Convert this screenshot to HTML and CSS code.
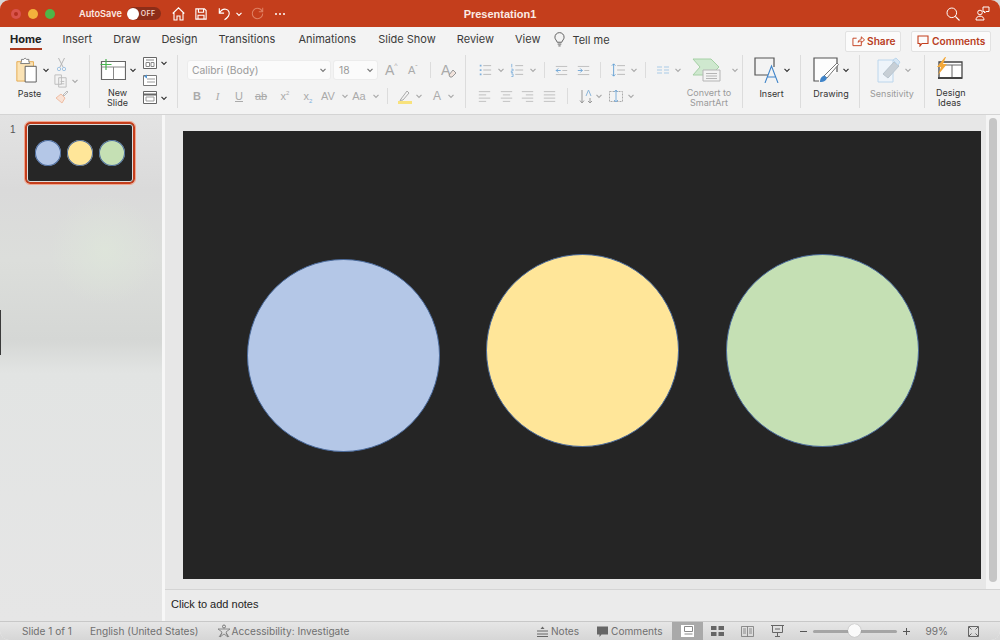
FILE: index.html
```html
<!DOCTYPE html>
<html lang="en">
<head>
<meta charset="utf-8">
<title>Presentation1</title>
<link rel="stylesheet" href="styles.css">
</head>
<body>
<svg class="defs" width="0" height="0" aria-hidden="true">
  <defs>
    <symbol id="chev" viewBox="0 0 8 8"><path d="M1.500 2.800 4 5.300l2.500-2.500" fill="none" stroke="currentColor" stroke-width="1.200"/></symbol>
    <symbol id="list" viewBox="0 0 16 16"><path d="M2 3h2M2 8h2M2 13h2" stroke="#7fb0dc" stroke-width="2" fill="none"/><path d="M6 3h9M6 8h9M6 13h9" stroke="currentColor" fill="none"/></symbol>
    <symbol id="numlist" viewBox="0 0 16 16"><path d="M2 1v4M1.500 7h2v2h-2v2h2M1.500 12.500h2v3h-2" stroke="#7fb0dc" fill="none"/><path d="M6 3h9M6 8h9M6 13h9" stroke="currentColor" fill="none"/></symbol>
    <symbol id="indl" viewBox="0 0 16 16"><path d="M1 3h14M9 8h6M1 13h14" stroke="currentColor" fill="none"/><path d="M7 8H1.500M4 5.500 1.500 8 4 10.500" stroke="#5c9bd3" fill="none"/></symbol>
    <symbol id="indr" viewBox="0 0 16 16"><path d="M1 3h14M9 8h6M1 13h14" stroke="currentColor" fill="none"/><path d="M1 8h5.500M4 5.500 6.500 8 4 10.500" stroke="#5c9bd3" fill="none"/></symbol>
    <symbol id="spacing" viewBox="0 0 16 16"><path d="M7 3h9M7 8h9M7 13h9" stroke="currentColor" fill="none"/><path d="M3 1v14M1 3l2-2 2 2M1 13l2 2 2-2" stroke="#5c9bd3" fill="none"/></symbol>
    <symbol id="al" viewBox="0 0 16 16"><path d="M1 2h14M1 6h9M1 10h14M1 14h9" stroke="currentColor" fill="none"/></symbol>
    <symbol id="ac" viewBox="0 0 16 16"><path d="M1 2h14M3.500 6h9M1 10h14M3.500 14h9" stroke="currentColor" fill="none"/></symbol>
    <symbol id="ar" viewBox="0 0 16 16"><path d="M1 2h14M6 6h9M1 10h14M6 14h9" stroke="currentColor" fill="none"/></symbol>
    <symbol id="aj" viewBox="0 0 16 16"><path d="M1 2h14M1 6h14M1 10h14M1 14h14" stroke="currentColor" fill="none"/></symbol>
  </defs>
</svg>
<div class="window">
  <header class="titlebar">
    <div class="tb-left">
      <span class="light light-r"></span><span class="light light-y"></span><span class="light light-g"></span>
      <span class="autosave">AutoSave</span>
      <span class="toggle"><span class="knob"></span><span class="off">OFF</span></span>
      <svg class="tb-home" width="13" height="14" viewBox="0 0 13 14"><path d="M.7 6.500 6.500.8l5.800 5.700M2 5.500V13h3V9h3v4h3V5.500" fill="none" stroke="#fff" stroke-width="1.100"/></svg>
      <svg class="tb-save" width="12" height="12" viewBox="0 0 14 14"><path d="M1 1h10l2 2v10H1zM4 1v4h6V1M3.500 13V8.500h7V13" fill="none" stroke="#fff" stroke-width="1.300"/></svg>
      <svg class="tb-undo" width="13" height="14" viewBox="0 0 15 15"><path d="M1.500 1v5.500H7M1.500 6.500C3.500 3 6 1.500 9 2c4 .8 5 5 3 8-1 1.600-2.500 3-4.500 4" fill="none" stroke="#fff" stroke-width="1.300"/></svg>
      <svg class="tb-chev" width="8" height="8"><use href="#chev"/></svg>
      <svg class="tb-redo" width="13" height="13" viewBox="0 0 15 15"><path d="M13.500 1v4.500H9M13 5C11.500 2.500 9.500 1.500 7.500 1.500a6 6 0 1 0 6 6" fill="none" stroke="#de7f62" stroke-width="1.200"/></svg>
      <span class="more"><i></i><i></i><i></i></span>
    </div>
    <div class="doc-title">Presentation1</div>
    <div class="tb-right">
      <svg width="14" height="14" viewBox="0 0 14 14"><circle cx="5.800" cy="5.800" r="4.800" fill="none" stroke="#fff"/><path d="M9.300 9.300 13.500 13.500" stroke="#fff" stroke-width="1.100"/></svg>
      <svg width="15" height="15" viewBox="0 0 15 15"><circle cx="5" cy="6.500" r="2.300" fill="none" stroke="#fff"/><path d="M1 14c0-2.500 1.500-3.800 4-3.800S9 11.500 9 14zM8 1h6v4.500h-3L9.500 7V5.500H8z" fill="none" stroke="#fff"/></svg>
    </div>
  </header>

  <nav class="tabs">
    <a class="tab tab-active">Home</a>
    <a class="tab">Insert</a>
    <a class="tab">Draw</a>
    <a class="tab">Design</a>
    <a class="tab tab-wide">Transitions</a>
    <a class="tab tab-mid">Animations</a>
    <a class="tab">Slide Show</a>
    <a class="tab">Review</a>
    <a class="tab">View</a>
    <span class="tell">
      <svg width="11" height="15" viewBox="0 0 12 16"><path d="M3.500 11C3 9 1 8 1 5.500a5 5 0 0 1 10 0C11 8 9 9 8.500 11zM4 13h4M4.800 15h2.400" fill="none" stroke="#555"/></svg>
      Tell me
    </span>
    <span class="tab-actions">
      <button class="act act-share"><svg width="13" height="12" viewBox="0 0 14 12"><path d="M5 3H1v8h9V8M6.500 7.500C7 5 9 4 10 4V1.500l3.500 3.300L10 8V6c-1.500 0-2.500.4-3.500 1.500z" fill="none" stroke="#c43e1c"/></svg>Share</button>
      <button class="act act-comments"><svg width="12" height="12" viewBox="0 0 12 12"><path d="M1 1h10v7.500H5L3 11V8.500H1z" fill="none" stroke="#c43e1c" stroke-width="1.100"/></svg>Comments</button>
    </span>
  </nav>

  <section class="ribbon">
    <div class="group g-clip">
      <div class="big paste">
        <div class="big-icon">
          <svg width="24" height="26" viewBox="0 0 26 28"><path d="M2 5h18v21H2z" fill="#fbe3b5" stroke="#e5a84a"/><path d="M7 5V2.500h2.500L11 1l1.500 1.500H15V5l1 2H6z" fill="#fff" stroke="#777"/><path d="M11 10h12v17H11z" fill="#fff" stroke="#555"/></svg>
          <svg class="chev-dark" width="8" height="8"><use href="#chev"/></svg>
        </div>
        <span class="big-label">Paste</span>
      </div>
      <div class="mini-col mini-clip">
        <svg width="9" height="15" viewBox="0 0 9 15"><path d="M1.500 1 6 10M7.500 1 3 10" stroke="#b5b5b5" fill="none"/><circle cx="2" cy="12" r="1.700" fill="none" stroke="#a3c4e2"/><circle cx="7" cy="12" r="1.700" fill="none" stroke="#a3c4e2"/></svg>
        <span class="mini"><svg width="14" height="14" viewBox="0 0 15 15"><path d="M1 1h7v10H1zM5 4h8v10H5z" fill="#f3f3f3" stroke="#bbb"/><path d="M7 8h4M7 10.500h4" stroke="#bbb"/></svg><svg class="chev" width="8" height="8"><use href="#chev"/></svg></span>
        <svg width="14" height="14" viewBox="0 0 14 14"><path d="M8 5l4-4 1 1-4 4z" fill="none" stroke="#bbb"/><path d="M6 4l4 4-3 5-6-5z" fill="#f9e2d5" stroke="#eebda4"/></svg>
      </div>
    </div>

    <div class="group g-slides">
      <div class="big newslide">
        <div class="big-icon">
          <svg width="26" height="21" viewBox="0 0 26 21"><path d="M1.500 2.500h24v18h-24z" fill="#fff" stroke="#666" stroke-width="1.200"/><path d="M1.500 8h24M13.500 8v12.500" stroke="#888"/><path d="M6 0v11M.5 5.500h11" stroke="#47b54f" stroke-width="1.200"/></svg>
          <svg class="chev-dark" width="8" height="8"><use href="#chev"/></svg>
        </div>
        <span class="big-label">New<br>Slide</span>
      </div>
      <div class="mini-col mini-slide">
        <span class="mini"><svg width="14" height="12" viewBox="0 0 14 12"><path d="M.5.500h13v11H.5z" fill="#fff" stroke="#666"/><path d="M3 3h8M3 5.500v4h3.500v-4zM8 5.500h3v4H8z" fill="none" stroke="#888"/></svg><svg class="chev-dark" width="8" height="8"><use href="#chev"/></svg></span>
        <span class="mini"><svg width="14" height="12" viewBox="0 0 14 12"><path d="M.5 1.500h13v10H.5z" fill="#fff" stroke="#777"/><path d="M4 5h8M4 8h8" stroke="#999"/><path d="M1 2.500 4 .5v4z" fill="#4f93d1"/></svg></span>
        <span class="mini"><svg width="14" height="13" viewBox="0 0 14 13"><path d="M.5.500h13v12H.5z" fill="#fff" stroke="#666"/><path d="M.5 3.500h13" stroke="#666" stroke-width="2"/><path d="M3 6h8v4H3z" fill="none" stroke="#999"/></svg><svg class="chev-dark" width="8" height="8"><use href="#chev"/></svg></span>
      </div>
    </div>

    <div class="group g-font">
      <div class="row r-font1">
        <span class="select sel-font">Calibri (Body)<svg width="8" height="8"><use href="#chev"/></svg></span>
        <span class="select sel-size">18<svg width="8" height="8"><use href="#chev"/></svg></span>
        <span class="gl gl-big">A<sup>^</sup></span>
        <span class="gl gl-small">A<sup>ˇ</sup></span>
        <span class="vsep vs-a"></span>
        <span class="gl gl-clear">A<svg width="9" height="9" viewBox="0 0 9 9"><path d="M1 6 5 1l3 3-4 4H2z" fill="#f1e3dc" stroke="#999"/></svg></span>
      </div>
      <div class="row r-font2">
        <span class="fmt f-b">B</span>
        <span class="fmt f-i">I</span>
        <span class="fmt f-u">U</span>
        <span class="fmt f-s">ab</span>
        <span class="fmt f-sup">x<sup>2</sup></span>
        <span class="fmt f-sub">x<sub>2</sub></span>
        <span class="fmt f-av">AV</span><svg class="chev" width="8" height="8"><use href="#chev"/></svg>
        <span class="fmt f-aa">Aa</span><svg class="chev" width="8" height="8"><use href="#chev"/></svg>
        <span class="vsep vs-b"></span>
        <svg class="f-hl" width="14" height="15" viewBox="0 0 14 15"><path d="M3 10 9 2l2 2-6 7-3 .5z" fill="none" stroke="#aaa"/><path d="M0 13.500h14" stroke="#f8e27c" stroke-width="3"/></svg><svg class="chev" width="8" height="8"><use href="#chev"/></svg>
        <span class="fmt f-col">A</span><svg class="chev" width="8" height="8"><use href="#chev"/></svg>
      </div>
    </div>

    <div class="group g-para">
      <div class="row r-para1">
        <svg class="p p1" width="14" height="14"><use href="#list"/></svg><svg class="chev" width="8" height="8"><use href="#chev"/></svg>
        <svg class="p p2" width="14" height="14"><use href="#numlist"/></svg><svg class="chev" width="8" height="8"><use href="#chev"/></svg>
        <span class="vsep vs-c"></span>
        <svg class="p p3" width="13" height="13"><use href="#indl"/></svg>
        <svg class="p p4" width="13" height="13"><use href="#indr"/></svg>
        <span class="vsep vs-d"></span>
        <svg class="p p5" width="14" height="14"><use href="#spacing"/></svg><svg class="chev" width="8" height="8"><use href="#chev"/></svg>
        <span class="vsep vs-e"></span>
        <svg class="p p6" width="12" height="8" viewBox="0 0 12 8"><path d="M0 1h5M7 1h5M0 4h5M7 4h5M0 7h5M7 7h5" stroke="#a9cbe7"/></svg><svg class="chev" width="8" height="8"><use href="#chev"/></svg>
      </div>
      <div class="row r-para2">
        <svg class="p a1" width="13" height="13"><use href="#al"/></svg>
        <svg class="p a2" width="13" height="13"><use href="#ac"/></svg>
        <svg class="p a3" width="13" height="13"><use href="#ar"/></svg>
        <svg class="p a4" width="13" height="13"><use href="#aj"/></svg>
        <span class="vsep vs-f"></span>
        <svg class="p a5" width="14" height="15" viewBox="0 0 14 15"><path d="M3 1v13M1 11.500 3 14l2-2.500" stroke="#999" fill="none"/><path d="M7 7l2.500-6L12 7" stroke="#8cb6da" fill="none"/><path d="M11 9v5M9 12l2 2 2-2" stroke="#999" fill="none"/></svg><svg class="chev" width="8" height="8"><use href="#chev"/></svg>
        <svg class="p a6" width="14" height="14" viewBox="0 0 14 14"><path d="M.5 2.500h13v10H.5z" fill="none" stroke="#aaa" stroke-dasharray="2 1"/><path d="M7 1v12M5 3l2-2 2 2M5 11l2 2 2-2" fill="none" stroke="#7fb0dc"/></svg><svg class="chev" width="8" height="8"><use href="#chev"/></svg>
      </div>
    </div>

    <div class="group g-art">
      <div class="big-icon">
        <svg width="36" height="24" viewBox="0 0 36 24"><path d="M1 1h18l8 8-8 8H1l7-8z" fill="#cfe8cf" stroke="#a5d0a5"/><path d="M11 12h17v11H11z" fill="#f3f3f3" stroke="#b5b5b5"/><path d="M14 15.500h11M14 18h11M14 20.500h11" stroke="#b5b5b5"/></svg>
        <svg class="chev" width="8" height="8"><use href="#chev"/></svg>
      </div>
      <span class="big-label dim-text">Convert to<br>SmartArt</span>
    </div>

    <div class="group g-insert">
      <div class="big-icon">
        <svg width="26" height="26" viewBox="0 0 26 26"><path d="M14 18H1V1h19v9" fill="none" stroke="#555" stroke-width="1.200"/><path d="M11 26 17.500 9 24 26M13.500 20h8" fill="none" stroke="#3f84c9" stroke-width="1.100"/></svg>
        <svg class="chev-dark" width="8" height="8"><use href="#chev"/></svg>
      </div>
      <span class="big-label">Insert</span>
    </div>

    <div class="group g-draw">
      <div class="big-icon">
        <svg width="26" height="26" viewBox="0 0 26 26"><path d="M6 24H1V1h23v14" fill="#fdfdfd" stroke="#555" stroke-width="1.200"/><path d="M11 19 24 6l1.500 1.500L14 21z" fill="#fff" stroke="#777"/><path d="M7 25c0-4 2-6 4.500-6.500L14 21c-1 3-4 4.500-7 4z" fill="#3f84c9"/></svg>
        <svg class="chev-dark" width="8" height="8"><use href="#chev"/></svg>
      </div>
      <span class="big-label">Drawing</span>
    </div>

    <div class="group g-sens">
      <div class="big-icon">
        <svg width="24" height="26" viewBox="0 0 24 26"><path d="M1 3h15v22H1z" fill="#eef4fa" stroke="#bcd6ec"/><path d="M6 17 17 5l5 4-11 12z" fill="#c7cfd6" stroke="#b8c4ce"/><path d="M16 3l3-2 4 4-2 3z" fill="#d7e6f3" stroke="#bcd6ec"/></svg>
        <svg class="chev" width="8" height="8"><use href="#chev"/></svg>
      </div>
      <span class="big-label dim-text">Sensitivity</span>
    </div>

    <div class="group g-ideas">
      <div class="big-icon">
        <svg width="27" height="25" viewBox="0 0 27 25"><path d="M3 5h23v16H3z" fill="#fff" stroke="#444" stroke-width="1.300"/><path d="M3 8h23M16 8v13" stroke="#666"/><path d="M2 21h24" stroke="#444" stroke-width="2"/><path d="M9 0 1 10h4L2 18l9-11H7l3-7z" fill="#f4a93a"/></svg>
      </div>
      <span class="big-label">Design<br>Ideas</span>
    </div>
  </section>

  <main class="workspace">
    <aside class="thumbs">
      <span class="thumb-num">1</span>
      <div class="thumb">
        <span class="t-dot t-blue"></span><span class="t-dot t-yellow"></span><span class="t-dot t-green"></span>
      </div>
    </aside>
    <div class="editor">
      <div class="stage">
        <div class="slide">
          <span class="circle c-blue"></span>
          <span class="circle c-yellow"></span>
          <span class="circle c-green"></span>
        </div>
        <div class="scrollbar"><span class="thumb-bar"></span></div>
      </div>
      <div class="notes">Click to add notes</div>
    </div>
  </main>

  <footer class="status">
    <span class="st st-slide">Slide 1 of 1</span>
    <span class="st st-lang">English (United States)</span>
    <span class="st st-acc"><svg width="14" height="14" viewBox="0 0 14 14"><circle cx="7" cy="2.500" r="1.500" fill="none" stroke="#777"/><path d="M1 5h12L9 8l2 5-4-3-4 3 2-5zM9 9l3 4M5 9l-3 4" fill="none" stroke="#777" stroke-width=".8"/></svg>Accessibility: Investigate</span>
    <span class="st st-notes"><svg width="11" height="11" viewBox="0 0 11 11"><path d="M0 5h11M0 8h11M0 10.500h11" stroke="#666"/><path d="M3.500 3 5.500.5 7.500 3z" fill="#666"/></svg>Notes</span>
    <span class="st st-comm"><svg width="11" height="11" viewBox="0 0 11 11"><path d="M0 .5h11v8H4.500L2.500 11V8.500H0z" fill="#666"/></svg>Comments</span>
    <span class="view view-on"><svg width="13" height="12" viewBox="0 0 13 12"><path d="M0 0h13v12H0z" fill="#fff"/><path d="M3.500 1.500h8v5h-8zM3.500 9h8" fill="none" stroke="#8a8a8a"/></svg></span>
    <span class="view"><svg width="13" height="10" viewBox="0 0 13 10"><path d="M0 0h5.500v4H0zM7.500 0H13v4H7.500zM0 6h5.500v4H0zM7.500 6H13v4H7.500z" fill="#666"/></svg></span>
    <span class="view"><svg width="13" height="11" viewBox="0 0 13 11"><path d="M.5.500h12v10H.5zM6.500.5v10M2 3h3M2 5h3M2 7h3M8 3h3M8 5h3M8 7h3" fill="none" stroke="#777" stroke-width=".8"/></svg></span>
    <span class="view"><svg width="13" height="12" viewBox="0 0 13 12"><path d="M0 .5h13M1.500.5v7h10v-7M6.500 7.500V11M4 11.500h5" fill="none" stroke="#666"/><path d="M4 4h5" stroke="#666"/></svg></span>
    <span class="zoom-minus"></span>
    <span class="slider"><span class="slider-knob"></span></span>
    <span class="zoom-plus"></span>
    <span class="st st-pct">99%</span>
    <svg class="fit" width="11" height="11" viewBox="0 0 11 11"><path d="M.5.500h10v10H.5z" fill="none" stroke="#666"/><path d="M1 1l2.500 2.500M10 1 7.500 3.500M1 10l2.500-2.500M10 10 7.500 7.500" stroke="#666"/></svg>
  </footer>
</div>
</body>
</html>
```
FILE: styles.css
```css
* { box-sizing: border-box; }
html, body { margin: 0; height: 100%; }
body {
  width: 1000px; height: 640px; overflow: hidden;
  background: #d8d8d8;
  font-family: "Inter", "Liberation Sans", sans-serif;
  color: #333;
}
.defs { position: absolute; }
svg { display: block; flex: none; }
.window {
  width: 1000px; height: 640px;
  display: flex; flex-direction: column;
  border-radius: 9px; overflow: hidden;
  background: #f3f3f3;
}

/* title bar */
.titlebar {
  height: 27px; flex: none;
  background: #c43e1c;
  display: grid; grid-template-columns: 1fr auto 1fr; align-items: center;
  color: #fff;
}
.tb-left { display: flex; align-items: center; padding-left: 11px; }
.light { width: 10px; height: 10px; border-radius: 50%; margin-right: 7px; }
.light-r { background: #e0533f; box-shadow: inset 0 0 0 3px #d9534a, inset 0 0 0 5px #b5301f; }
.light-y { background: #f3b13c; }
.light-g { background: #4fb548; }
.autosave { font-size: 9.200px; font-weight: 600; margin-left: 17px; color: #fbe9e3; }
.toggle {
  width: 34px; height: 13px; margin-left: 5px; border-radius: 7px;
  background: #8c2d18; display: flex; align-items: center;
  font-size: 7px; font-weight: 600;
}
.knob { width: 12px; height: 12px; border-radius: 50%; background: #fff; }
.off { margin-left: 2px; letter-spacing: .3px; color: #f4d6cb; }
.tb-home { margin-left: 11px; }
.tb-save { margin-left: 10px; }
.tb-undo { margin-left: 11px; }
.tb-chev { margin-left: 4px; color: #fff; }
.tb-redo { margin-left: 8px; }
.more { display: flex; gap: 2px; margin-left: 11px; }
.more i { width: 2px; height: 2px; background: #fff; border-radius: 50%; }
.doc-title { font-size: 11px; font-weight: 700; color: #fbeae4; font-family: "Liberation Sans", sans-serif; }
.tb-right { display: flex; justify-content: flex-end; align-items: center; gap: 15px; padding-right: 10px; }

/* tabs */
.tabs {
  height: 28px; flex: none; display: flex; align-items: center;
  padding-left: 10px;
  font-size: 11px; color: #3b3b3b;
}
.tab { margin-right: 21px; position: relative; height: 28px; line-height: 25px; }
.tab-wide { margin-right: 23px; }
.tab-mid { margin-right: 22px; }
.tab-active { font-weight: 700; color: #222; }
.tab-active::after {
  content: ""; position: absolute; left: 0; right: 0; bottom: 5px; height: 2px; background: #a9391d;
}
.tell { display: flex; align-items: center; gap: 7px; margin-left: -7px; margin-bottom: 3px; }
.tab-actions { margin-left: auto; display: flex; gap: 10px; padding-right: 9px; }
.act {
  height: 21px; display: flex; align-items: center; gap: 2px;
  background: #fbfbfb; border: 1px solid #e2e2e2; border-radius: 2px;
  color: #b9401f; font: 600 10.200px "Inter", "Liberation Sans", sans-serif;
}
.act-share { width: 56px; padding: 0 0 0 6px; }
.act-comments { width: 80px; padding: 0 0 0 5px; gap: 3px; }

/* ribbon */
.ribbon {
  height: 60px; flex: none; display: flex;
  border-bottom: 1px solid #d4d4d4;
  font-size: 9px;
}
.group { height: 53px; border-right: 1px solid #dcdcdc; display: flex; flex: none; }
.big { display: flex; flex-direction: column; }
.big-icon { display: flex; align-items: center; height: 30px; }
.big-label { text-align: center; line-height: 10px; font-size: 9px; color: #333; padding-top: 4px; }
.dim-text { color: #9a9a9a; }
.chev { color: #aaa; margin-left: 3px; }
.chev-dark { color: #333; margin-left: 3px; }

.g-clip { width: 90px; padding-left: 15px; }
.paste { width: 35px; }
.paste .big-label { width: 29px; }
.mini-col { display: flex; flex-direction: column; justify-content: space-between; height: 49px; padding-top: 2px; }
.mini-clip { margin-left: 4px; align-items: flex-start; }
.mini-clip > svg:first-child { margin-left: 3px; }
.mini-clip > svg:last-child { margin-left: 1px; }
.mini { display: flex; align-items: center; }

.g-slides { width: 88px; padding-left: 10px; }
.newslide { width: 44px; }
.newslide .big-label { width: 35px; }
.mini-slide { margin-left: -1px; }

.g-font { width: 288px; padding-left: 9px; flex-direction: column; }
.row { display: flex; align-items: center; }
.r-font1 { height: 20px; margin-top: 5px; }
.r-font2 { height: 20px; margin-top: 6px; }
.select {
  height: 20px; background: #fbfbfb; border-radius: 3px; border: 1px solid #ececec;
  display: flex; align-items: center; justify-content: space-between;
  padding: 0 3px 0 5px; color: #9a9a9a; font-size: 10.300px;
}
.select svg { color: #777; }
.sel-font { width: 144px; padding-left: 4px; }
.sel-size { width: 45px; margin-left: 2px; }
.gl { color: #aaa; display: flex; align-items: flex-start; font-family: "Liberation Sans", sans-serif; }
.gl sup { font-size: 7px; line-height: 8px; vertical-align: baseline; }
.gl-big { font-size: 14px; margin-left: 7px; width: 22px; }
.gl-small { font-size: 11px; margin-left: 1px; width: 16px; }
.gl-clear { font-size: 14px; align-items: flex-end; margin-left: 10px; }
.gl-clear svg { margin-left: -2px; }
.vsep { width: 1px; height: 16px; background: #dcdcdc; flex: none; }
.vs-a { margin-left: 6px; }

.fmt { color: #aaa; font-size: 11px; font-family: "Liberation Sans", sans-serif; text-align: center; flex: none; }
.fmt sup, .fmt sub { font-size: 6px; line-height: 0; }
.fmt sub { color: #7fb0dc; }
.f-b { width: 20px; font-weight: 700; }
.f-i { width: 21px; font-style: italic; font-family: "Liberation Serif", serif; }
.f-u { width: 22px; text-decoration: underline; }
.f-s { width: 22px; text-decoration: line-through; }
.f-sup { width: 26px; }
.f-sub { width: 20px; }
.f-av { width: 20px; }
.f-aa { width: 20px; }
.vs-b { margin-left: 7px; }
.f-hl { margin-left: 10px; }
.f-col { width: 14px; margin-left: 7px; font-size: 12px; }

.g-para { width: 213px; padding-left: 12px; flex-direction: column; color: #b5b5b5; border-right: 0; }
.r-para1 { height: 20px; margin-top: 5px; }
.r-para2 { height: 20px; margin-top: 6px; }
.g-para .chev { margin-left: 5px; }
.p2 { margin-left: 5px; }
.vs-c { margin-left: 7px; }
.p3 { margin-left: 10px; }
.p4 { margin-left: 9px; }
.vs-d { margin-left: 10px; }
.p5 { margin-left: 10px; }
.vs-e { margin-left: 7px; }
.p6 { margin-left: 11px; }
.a2 { margin-left: 9px; }
.a3 { margin-left: 8px; }
.a4 { margin-left: 9px; }
.vs-f { margin-left: 11px; }
.a5 { margin-left: 11px; }
.g-para .a5 + .chev { margin-left: 2px; }
.a6 { margin-left: 6px; }
.g-para .a6 + .chev { margin-left: 4px; }

.g-art, .g-insert, .g-draw, .g-sens, .g-ideas { flex-direction: column; }
.g-art { width: 64px; padding-left: 13px; }
.g-art .big-label { width: 60px; margin-left: -13px; }
.g-insert { width: 58px; padding-left: 11px; }
.g-insert .big-label { width: 35px; }
.g-draw { width: 59px; padding-left: 12px; }
.g-draw .big-label { width: 36px; }
.g-sens { width: 65px; padding-left: 17px; }
.g-sens .big-label { width: 60px; margin-left: -15px; }
.g-ideas { width: 75px; padding-left: 11px; border-right: 0; }
.g-ideas .big-label { width: 27px; }

/* workspace */
.workspace { flex: 1; min-height: 0; display: flex; }
.thumbs {
  width: 162px; flex: none; display: flex; align-items: flex-start;
  background:
    linear-gradient(#3a3a3a, #3a3a3a) 0 195px / 1px 45px no-repeat,
    radial-gradient(circle at 105px 135px, rgba(222, 230, 218, .8) 0, rgba(222, 230, 218, 0) 55px),
    linear-gradient(#e3e3e3 0, #dadada 75px, #dcdedb 145px, #d5d7d5 225px, #e2e4e3 258px, #e6e6e6 100%);
  padding: 7px 0 0 10px;
}
.thumb-num { font-size: 10px; color: #555; font-family: "Liberation Sans", sans-serif; width: 15px; padding-top: 2px; }
.thumb {
  width: 110px; height: 62px;
  background: #262626; border: 2px solid #c43e1c; border-radius: 5px; outline: 1px solid #f0a58e;
  display: flex; align-items: center; gap: 6px; padding: 0 0 0 8px; box-shadow: inset 0 0 0 1px #ddd;
}
.t-dot { width: 26px; height: 26px; border-radius: 50%; flex: none; box-shadow: inset 0 0 0 1px #4a6a9c; }
.t-blue { background: #b4c7e7; }
.t-yellow { background: #ffe699; }
.t-green { background: #c5e0b4; }
.editor { flex: 1; min-width: 0; border-left: 3px solid #f7f7f7; display: flex; flex-direction: column; background: #e7e7e7; }
.stage { flex: 1; min-height: 0; display: flex; align-items: flex-start; padding: 16px 0 0 18px; position: relative; }
.slide { width: 798px; height: 448px; background: #252525; position: relative; flex: none; }
.circle { position: absolute; width: 193px; height: 193px; border-radius: 50%; border: 1px solid #4a6a9c; }
.c-blue { left: 64px; top: 128px; background: #b4c7e7; }
.c-yellow { left: 303px; top: 123px; background: #ffe699; }
.c-green { left: 543px; top: 123px; background: #c5e0b4; }
.scrollbar { position: absolute; right: 0; top: 0; bottom: 0; width: 14px; background: #f4f4f4; padding: 3px 3px 7px 3px; }
.thumb-bar { display: block; width: 8px; height: 100%; background: #c6c6c6; border-radius: 4px; }
.notes {
  height: 32px; flex: none; border-top: 1px solid #d4d4d4;
  padding: 8px 0 0 6px; font: 11px "Liberation Sans", sans-serif; color: #222;
  background: #ebebeb;
}

/* status */
.status {
  height: 19px; flex: none; display: flex; align-items: center;
  background: linear-gradient(#e6e6e6, #d6d6d6);
  border-top: 1px solid #c8c8c8;
  font-size: 10.100px; color: #707070;
  padding-left: 22px;
}
.st { display: flex; align-items: center; gap: 1px; }
.st-lang { margin-left: 18px; }
.st-acc { margin-left: 18px; }
.st-notes { margin-left: auto; gap: 3px; }
.st-comm { margin-left: 18px; gap: 3px; }
.view { width: 30px; height: 19px; display: flex; align-items: center; justify-content: center; }
.view-on { background: #a9a9a9; margin-left: 9px; width: 31px; }
.zoom-minus, .zoom-plus { width: 7px; height: 7px; position: relative; flex: none; }
.zoom-minus { margin-left: 7px; }
.zoom-minus::before, .zoom-plus::before { content: ""; position: absolute; left: 0; right: 0; top: 3px; height: 1.500px; background: #555; }
.zoom-plus::after { content: ""; position: absolute; top: 0; bottom: 0; left: 3px; width: 1.500px; background: #555; }
.slider { width: 84px; height: 3px; background: #a5a5a5; border-radius: 2px; margin-left: 6px; position: relative; flex: none; }
.slider-knob { position: absolute; left: 35px; top: -6px; width: 13px; height: 13px; border-radius: 50%; background: #fafafa; box-shadow: 0 0 1px #888; }
.zoom-plus { margin-left: 6px; }
.st-pct { margin-left: 16px; }
.fit { margin-left: 20px; margin-right: 21px; }
```
